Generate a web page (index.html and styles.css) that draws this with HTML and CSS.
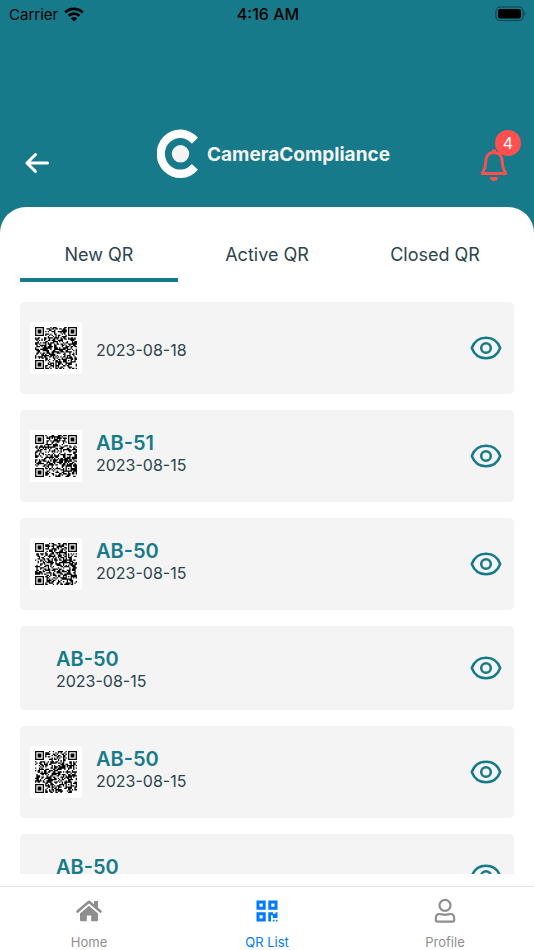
FILE: index.html
```html
<!DOCTYPE html>
<html lang="en">
<head>
    <meta charset="UTF-8">
    <meta name="viewport" content="width=device-width, initial-scale=1.0">
    <title>CameraCompliance - QR List</title>
    <link rel="stylesheet" href="styles.css">
</head>
<body>
    <!-- Icons used more than once -->
    <svg class="sprite" aria-hidden="true">
        <symbol id="eye" viewBox="0 0 32 24">
            <path d="M1.800 12C4.300 5.300 9.500 1.800 16 1.800S27.700 5.300 30.200 12C27.700 18.700 22.500 22.200 16 22.200S4.300 18.700 1.800 12Z" fill="none" stroke="currentColor" stroke-width="2.500" stroke-linejoin="round"/>
            <circle cx="16" cy="12" r="4.800" fill="none" stroke="currentColor" stroke-width="2.500"/>
        </symbol>
    </svg>

    <div class="status-bar">
        <div class="carrier">
            <span>Carrier</span>
            <svg width="20" height="15" viewBox="0 0 20 15">
                <g fill="none" stroke="#000" stroke-width="2.800">
                    <path d="M1.300 5.400A12.300 12.300 0 0 1 18.700 5.400"/>
                    <path d="M4.600 8.800A7.700 7.700 0 0 1 15.400 8.800"/>
                </g>
                <path d="M10 14.500L6.900 11.400A4.400 4.400 0 0 1 13.100 11.400Z"/>
            </svg>
        </div>
        <span class="time">4:16 AM</span>
        <svg class="battery" width="32" height="16" viewBox="0 0 32 16">
            <rect x="1" y="1" width="27" height="13.500" rx="4" fill="none" stroke="#000" stroke-opacity="0.450" stroke-width="1.200"/>
            <rect x="3" y="3" width="23" height="9.500" rx="2.200"/>
            <path d="M29.500 5.500Q31.500 7.700 29.500 10Z" fill-opacity="0.500"/>
        </svg>
    </div>

    <header class="header">
        <button class="back" aria-label="Back">
            <svg width="24" height="20" viewBox="0 0 24 20">
                <path d="M10.500 1.500L2 10L10.500 18.500M2 10H22.500" fill="none" stroke="#fff" stroke-width="3" stroke-linecap="round" stroke-linejoin="round"/>
            </svg>
        </button>
        <div class="brand">
            <svg width="42" height="50" viewBox="0 0 42 50">
                <path d="M41 8.800A23.600 24.300 0 1 0 41 40.800L34.800 34.900A15.200 15.800 0 1 1 34.800 14.700Z" fill="#fff"/>
                <circle cx="23.500" cy="24.800" r="8.700" fill="#f4f4f4"/>
            </svg>
            <span>CameraCompliance</span>
        </div>
        <button class="bell" aria-label="Notifications">
            <svg width="28" height="32" viewBox="0 0 28 32">
                <path d="M14 3.500C8 3.500 5.800 8 5.800 12.500C5.800 19 4.500 20.500 2.200 24.500H25.800C23.500 20.500 22.200 19 22.200 12.500C22.200 8 20 3.500 14 3.500Z" fill="none" stroke="#ff5050" stroke-width="2.800" stroke-linejoin="round"/>
                <path d="M12 3V2A2 2 0 0 1 16 2V3Z" fill="#ff5050"/>
                <path d="M10 28H18A4 4 0 0 1 10 28Z" fill="#ff5050"/>
            </svg>
            <span class="badge">4</span>
        </button>
    </header>

    <main class="sheet">
        <div class="tabs">
            <button class="tab active">New QR</button>
            <button class="tab">Active QR</button>
            <button class="tab">Closed QR</button>
        </div>

        <div class="list">
            <div class="card">
                <svg class="qr" data-seed="18" viewBox="-4 -4 41 41"></svg>
                <div class="info no-title">
                    <p>2023-08-18</p>
                </div>
                <button class="view" aria-label="View"><svg><use href="#eye"/></svg></button>
            </div>
            <div class="card">
                <svg class="qr" data-seed="51" viewBox="-4 -4 41 41"></svg>
                <div class="info">
                    <h2>AB-51</h2>
                    <p>2023-08-15</p>
                </div>
                <button class="view" aria-label="View"><svg><use href="#eye"/></svg></button>
            </div>
            <div class="card">
                <svg class="qr" data-seed="50" viewBox="-4 -4 41 41"></svg>
                <div class="info">
                    <h2>AB-50</h2>
                    <p>2023-08-15</p>
                </div>
                <button class="view" aria-label="View"><svg><use href="#eye"/></svg></button>
            </div>
            <div class="card no-image">
                <div class="info">
                    <h2>AB-50</h2>
                    <p>2023-08-15</p>
                </div>
                <button class="view" aria-label="View"><svg><use href="#eye"/></svg></button>
            </div>
            <div class="card">
                <svg class="qr" data-seed="77" viewBox="-4 -4 41 41"></svg>
                <div class="info">
                    <h2>AB-50</h2>
                    <p>2023-08-15</p>
                </div>
                <button class="view" aria-label="View"><svg><use href="#eye"/></svg></button>
            </div>
            <div class="card no-image">
                <div class="info">
                    <h2>AB-50</h2>
                </div>
                <button class="view" aria-label="View"><svg><use href="#eye"/></svg></button>
            </div>
        </div>
    </main>

    <nav class="bottom-nav">
        <a href="#home">
            <svg width="28" height="28" viewBox="0 0 28 28">
                <path d="M2.500 14.500L14 4.800L25.500 14.500" fill="none" stroke="currentColor" stroke-width="2.600" stroke-linecap="round" stroke-linejoin="round"/>
                <path d="M19 4H23V12L19 8.500Z" fill="currentColor"/>
                <path d="M14 8.800L23 16.500V23Q23 24.300 21.700 24.300H16.200V18.500H11.800V24.300H6.300Q5 24.300 5 23V16.500Z" fill="currentColor"/>
            </svg>
            <span>Home</span>
        </a>
        <a href="#qr-list" class="active">
            <svg width="28" height="28" viewBox="0 0 28 28">
                <path fill="currentColor" fill-rule="evenodd" d="M3.500 3.500H12.700V12.700H3.500ZM6.500 6.500V9.700H9.700V6.500ZM15.300 3.500H24.500V12.700H15.300ZM18.300 6.500V9.700H21.500V6.500ZM3.500 15.300H12.700V24.500H3.500ZM6.500 18.300V21.500H9.700V18.300ZM15.300 15.300H20V16.800H22.500V15.300H24.500V21H19.800V18.300H18V24.500H15.300ZM19.800 22.800H21.500V24.500H19.800ZM22.900 22.800H24.500V24.500H22.900Z"/>
            </svg>
            <span>QR List</span>
        </a>
        <a href="#profile">
            <svg width="28" height="28" viewBox="0 0 28 28">
                <g fill="none" stroke="currentColor" stroke-width="2.200" stroke-linejoin="round">
                    <circle cx="14" cy="8.300" r="5.500"/>
                    <path d="M8.500 17C11 17 11.500 17.800 14 17.800S17 17 19.500 17C22 17 23.200 19.200 23.200 21.800V23Q23.200 24.600 21.600 24.600H6.400Q4.800 24.600 4.800 23V21.800C4.800 19.200 6 17 8.500 17Z"/>
                </g>
            </svg>
            <span>Profile</span>
        </a>
    </nav>

    <script>
        const SIZE = 33;

        // Is the module part of one of the three corner squares?
        // Returns null when it is not, otherwise whether it is dark
        function finder(x, y) {
            const corners = [[3, 3], [SIZE - 4, 3], [3, SIZE - 4]];
            for (const [cx, cy] of corners) {
                const d = Math.max(Math.abs(x - cx), Math.abs(y - cy));
                if (d <= 4) {
                    return d < 2 || d === 3;
                }
            }
            return null;
        }

        function drawQr(svg) {
            let seed = Number(svg.dataset.seed) * 7919;
            let d = '';
            for (let y = 0; y < SIZE; y++) {
                for (let x = 0; x < SIZE; x++) {
                    seed = (seed * 1103515245 + 12345) % 2147483648;
                    let dark = finder(x, y);
                    if (dark === null) {
                        const a = Math.max(Math.abs(x - 26), Math.abs(y - 26));
                        dark = a <= 2 ? a !== 1 : seed / 2147483648 < 0.52;
                    }
                    if (dark) {
                        d += 'M' + x + ' ' + y + 'h1v1h-1z';
                    }
                }
            }
            const path = document.createElementNS('http://www.w3.org/2000/svg', 'path');
            path.setAttribute('d', d);
            svg.appendChild(path);
        }

        document.querySelectorAll('.qr').forEach(drawQr);
    </script>
</body>
</html>
```
FILE: styles.css
```css
* {
    box-sizing: border-box;
}

body {
    font-family: Inter, "Liberation Sans", sans-serif;
    background-color: #177a8a;
    color: #2b444d;
    margin: 0;
    height: 100vh;
    display: flex;
    flex-direction: column;
}

button {
    font-family: inherit;
    color: inherit;
    background: none;
    border: none;
    padding: 0;
    cursor: pointer;
}

svg {
    display: block;
}

h2, p {
    margin: 0;
}

.sprite {
    position: absolute;
    width: 0;
    height: 0;
}

/* Status bar */
.status-bar {
    display: grid;
    grid-template-columns: 1fr auto 1fr;
    align-items: center;
    height: 28px;
    padding: 0 7px 0 9px;
    color: #000;
    font-size: 15px;
}

.carrier {
    display: flex;
    align-items: center;
    gap: 6px;
}

.time {
    font-size: 16px;
    font-weight: 500;
}

.battery {
    justify-self: end;
}

/* Header */
.header {
    display: flex;
    justify-content: space-between;
    align-items: flex-end;
    padding: 101px 26px 26px 25px;
}

.back {
    width: 42px;
    padding-bottom: 8px;
}

.brand {
    display: flex;
    align-items: center;
    gap: 8px;
    padding-bottom: 2px;
    color: #f4f4f4;
    font-size: 19px;
    font-weight: 700;
}

.bell {
    position: relative;
}

.badge {
    position: absolute;
    top: -19px;
    right: -13px;
    width: 26px;
    height: 26px;
    border-radius: 50%;
    background-color: #ff5050;
    color: #fff;
    font-size: 16px;
    line-height: 26px;
    text-align: center;
}

/* Content */
.sheet {
    flex: 1;
    min-height: 0;
    display: flex;
    flex-direction: column;
    background-color: #fff;
    border-radius: 26px 26px 0 0;
    padding: 36px 20px 12px;
}

.tabs {
    display: grid;
    grid-template-columns: repeat(3, 1fr);
    gap: 10px;
    margin-bottom: 20px;
}

.tab {
    font-size: 18px;
    line-height: 24px;
    padding-bottom: 11px;
    border-bottom: 4px solid transparent;
}

.tab.active {
    border-bottom-color: #177a8a;
}

.list {
    flex: 1;
    min-height: 0;
    display: flex;
    flex-direction: column;
    gap: 16px;
    overflow-y: auto;
    scrollbar-width: none;
}

.card {
    flex-shrink: 0;
    display: flex;
    align-items: center;
    gap: 14px;
    background-color: #f4f4f4;
    border-radius: 5px;
    padding: 20px 12px 20px 10px;
}

.card.no-image {
    min-height: 84px;
    padding-left: 36px;
}

.qr {
    width: 52px;
    height: 52px;
    background-color: #fff;
}

.info {
    flex: 1;
    align-self: flex-start;
}

.info.no-title {
    align-self: center;
    padding-top: 4px;
}

.info h2 {
    color: #177a8a;
    font-size: 20px;
    font-weight: 600;
    line-height: 26px;
}

.info p {
    font-size: 16px;
    line-height: 18px;
}

.view {
    color: #177a8a;
}

.view svg {
    width: 32px;
    height: 24px;
}

/* Bottom navigation */
.bottom-nav {
    display: grid;
    grid-template-columns: repeat(3, 1fr);
    background-color: #fff;
    border-top: 1px solid #e4e4e4;
    padding-top: 10px;
}

.bottom-nav a {
    display: flex;
    flex-direction: column;
    align-items: center;
    gap: 9px;
    color: #8e8e8f;
    font-size: 13px;
    line-height: 16px;
    text-decoration: none;
}

.bottom-nav a.active {
    color: #007aff;
}
```
